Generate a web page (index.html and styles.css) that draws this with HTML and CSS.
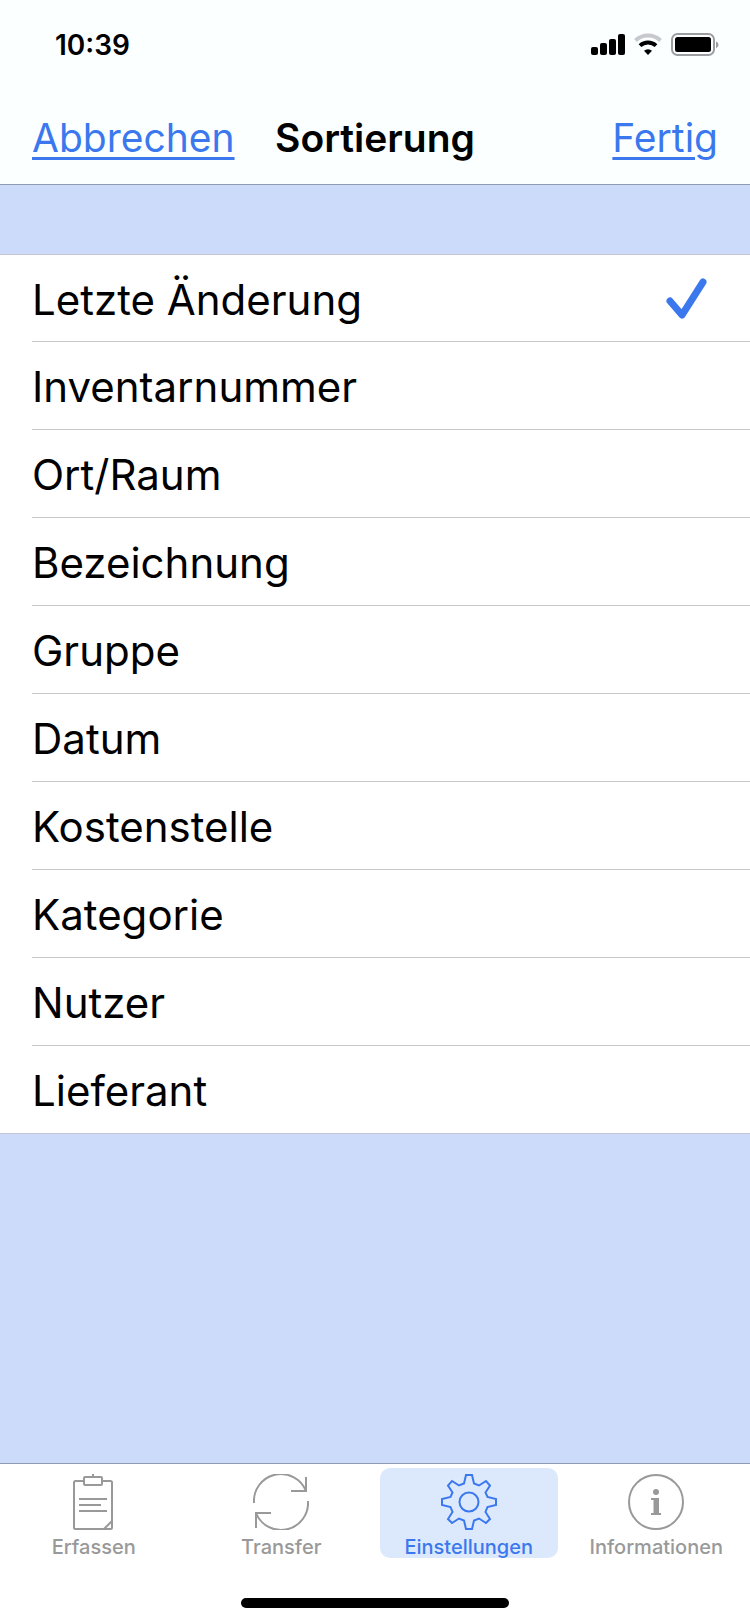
FILE: index.html
```
<!DOCTYPE html>
<html lang="de">

<head>
    <meta charset="UTF-8">
    <meta name="viewport" content="width=device-width, initial-scale=1.0">
    <title>Sortierung</title>
    <link rel="stylesheet" href="styles.css">
</head>

<body>
    <div class="app">
        <header class="header">
            <div class="status-bar">
                <span class="time">10:39</span>
                <svg class="status-icons" width="128" height="24" viewBox="0 0 128 24">
                    <!-- signal -->
                    <rect x="0" y="14" width="7" height="8" rx="2" />
                    <rect x="9" y="10" width="7" height="12" rx="2" />
                    <rect x="18" y="6" width="7" height="16" rx="2" />
                    <rect x="27" y="1" width="7" height="21" rx="2" />
                    <!-- wifi -->
                    <path d="M44.5 7.5a18.2 18.2 0 0 1 25 0" fill="none" stroke="#c8c9cf" stroke-width="4" />
                    <path d="M49 12.6a11.8 11.8 0 0 1 16 0" fill="none" stroke="#000" stroke-width="4" />
                    <path d="M57 22l-4-4.2a6 6 0 0 1 8 0z" />
                    <!-- battery -->
                    <rect x="81" y="1" width="42" height="21" rx="5.5" fill="none" stroke="#9c9da1" stroke-width="2" />
                    <rect x="84" y="4" width="36" height="15" rx="2.5" />
                    <path d="M125 8.5c3.2 1 3.2 5.5 0 6.5z" fill="#9c9da1" />
                </svg>
            </div>
            <nav class="nav-bar">
                <a class="nav-link" href="#">Abbrechen</a>
                <h1 class="nav-title">Sortierung</h1>
                <a class="nav-link nav-done" href="#">Fertig</a>
            </nav>
        </header>

        <main class="content">
            <form class="list">
                <label class="row">
                    <input type="radio" name="sort" checked>
                    <span>Letzte Änderung</span>
                    <svg class="check" width="42" height="42" viewBox="0 0 42 42">
                        <path d="M5 23L17 37L38 4" />
                    </svg>
                </label>
                <label class="row">
                    <input type="radio" name="sort">
                    <span>Inventarnummer</span>
                    <svg class="check" width="42" height="42" viewBox="0 0 42 42">
                        <path d="M5 23L17 37L38 4" />
                    </svg>
                </label>
                <label class="row">
                    <input type="radio" name="sort">
                    <span>Ort/Raum</span>
                    <svg class="check" width="42" height="42" viewBox="0 0 42 42">
                        <path d="M5 23L17 37L38 4" />
                    </svg>
                </label>
                <label class="row">
                    <input type="radio" name="sort">
                    <span>Bezeichnung</span>
                    <svg class="check" width="42" height="42" viewBox="0 0 42 42">
                        <path d="M5 23L17 37L38 4" />
                    </svg>
                </label>
                <label class="row">
                    <input type="radio" name="sort">
                    <span>Gruppe</span>
                    <svg class="check" width="42" height="42" viewBox="0 0 42 42">
                        <path d="M5 23L17 37L38 4" />
                    </svg>
                </label>
                <label class="row">
                    <input type="radio" name="sort">
                    <span>Datum</span>
                    <svg class="check" width="42" height="42" viewBox="0 0 42 42">
                        <path d="M5 23L17 37L38 4" />
                    </svg>
                </label>
                <label class="row">
                    <input type="radio" name="sort">
                    <span>Kostenstelle</span>
                    <svg class="check" width="42" height="42" viewBox="0 0 42 42">
                        <path d="M5 23L17 37L38 4" />
                    </svg>
                </label>
                <label class="row">
                    <input type="radio" name="sort">
                    <span>Kategorie</span>
                    <svg class="check" width="42" height="42" viewBox="0 0 42 42">
                        <path d="M5 23L17 37L38 4" />
                    </svg>
                </label>
                <label class="row">
                    <input type="radio" name="sort">
                    <span>Nutzer</span>
                    <svg class="check" width="42" height="42" viewBox="0 0 42 42">
                        <path d="M5 23L17 37L38 4" />
                    </svg>
                </label>
                <label class="row">
                    <input type="radio" name="sort">
                    <span>Lieferant</span>
                    <svg class="check" width="42" height="42" viewBox="0 0 42 42">
                        <path d="M5 23L17 37L38 4" />
                    </svg>
                </label>
            </form>
        </main>

        <footer class="footer">
            <nav class="tab-bar">
                <a class="tab" href="#">
                    <svg width="56" height="56" viewBox="0 0 56 56">
                        <path d="M18 7H9.500Q8 7 8 8.500V53.500Q8 55 9.500 55H44.500Q46 55 46 53.500V8.500Q46 7 44.500 7H36" />
                        <rect x="18" y="3" width="18" height="8" rx="1" />
                        <path d="M27 0V3M13 25H41M13 31H35M13 37H41M38 55L46 47" />
                    </svg>
                    <span>Erfassen</span>
                </a>
                <a class="tab" href="#">
                    <svg width="56" height="56" viewBox="0 0 56 56">
                        <path d="M1 29A27 27 0 0 1 53 17M53 3V17H38" />
                        <path d="M55 27A27 27 0 0 1 3 39M3 54V39H18" />
                    </svg>
                    <span>Transfer</span>
                </a>
                <a class="tab active" href="#">
                    <svg width="56" height="56" viewBox="0 0 56 56">
                        <path d="M25 1H31L33 9.500L38 11.500L45 7L49 11.500L44.500 18.500L46.500 23L55 25V31L46.500 33L44.500 38L49 45L45 49L38 44.500L33 46.500L31 55H25L23 46.500L18 44.500L11 49L7 45L11.500 38L9.500 33L1 31V25L9.500 23L11.500 18.500L7 11.500L11 7L18 11.500L23 9.500Z" />
                        <circle cx="28" cy="28" r="9.500" />
                    </svg>
                    <span>Einstellungen</span>
                </a>
                <a class="tab" href="#">
                    <svg width="56" height="56" viewBox="0 0 56 56">
                        <circle cx="28" cy="28" r="27" />
                        <g class="solid">
                            <circle cx="28" cy="18" r="3" />
                            <path d="M23 24H31V39H33V41H23V39H25.500V26H23Z" />
                        </g>
                    </svg>
                    <span>Informationen</span>
                </a>
            </nav>
            <div class="home-indicator"></div>
        </footer>
    </div>
</body>

</html>
```
FILE: styles.css
```
* {
    padding: 0;
    margin: 0;
    box-sizing: border-box;
}

body {
    font-family: Inter, "Liberation Sans", sans-serif;
    color: #000;
    background-color: #cddbfb;
}

.app {
    min-height: 100vh;
    display: flex;
    flex-direction: column;
}

/* header */
.header {
    background-color: #fbffff;
    border-bottom: 1px solid #8f9bb4;
}

.status-bar {
    height: 88px;
    padding: 2px 31px 0 55px;
    display: flex;
    align-items: center;
    justify-content: space-between;
}

.time {
    font-size: 28px;
    font-weight: 600;
}

.nav-bar {
    height: 96px;
    padding: 2px 32px 0;
    display: grid;
    grid-template-columns: 1fr auto 1fr;
    align-items: center;
}

.nav-link {
    font-size: 39px;
    color: #3b78ee;
    text-decoration-thickness: 3px;
    text-underline-offset: 5px;
}

.nav-done {
    justify-self: end;
}

.nav-title {
    font-size: 39px;
    font-weight: 600;
}

/* list */
.content {
    flex: 1;
    padding: 69px 0;
}

.list {
    background-color: #fff;
    border-top: 1px solid #c3c6d2;
    border-bottom: 1px solid #c3c6d2;
}

.row {
    height: 88px;
    margin-left: 32px;
    padding: 2px 43px 0 0;
    display: flex;
    align-items: center;
    justify-content: space-between;
    border-bottom: 1px solid #c7c7c9;
    font-size: 42px;
    cursor: pointer;
}

.row:first-child,
.row:last-child {
    height: 87px;
}

.row:last-child {
    border-bottom: none;
}

.row input {
    position: absolute;
    opacity: 0;
}

.check {
    display: none;
    fill: none;
    stroke: #3b78ee;
    stroke-width: 7;
    stroke-linecap: round;
    stroke-linejoin: round;
}

.row input:checked ~ .check {
    display: block;
}

/* tab bar */
.footer {
    background-color: #fff;
    border-top: 1px solid #8f9bb4;
}

.tab-bar {
    padding-top: 4px;
    display: grid;
    grid-template-columns: repeat(4, 1fr);
}

.tab {
    height: 90px;
    margin: 0 5px;
    padding-top: 6px;
    display: flex;
    flex-direction: column;
    align-items: center;
    gap: 5px;
    border-radius: 10px;
    color: #999;
    font-size: 20px;
    line-height: 24px;
    font-weight: 500;
    text-decoration: none;
}

.tab svg {
    flex-shrink: 0;
    fill: none;
    stroke: currentColor;
    stroke-width: 2;
}

.tab .solid {
    fill: currentColor;
    stroke: none;
}

.tab.active {
    color: #3b78ee;
    background-color: #dce9fc;
}

.home-indicator {
    width: 268px;
    height: 10px;
    margin: 40px auto 16px;
    border-radius: 5px;
    background-color: #000;
}
```
